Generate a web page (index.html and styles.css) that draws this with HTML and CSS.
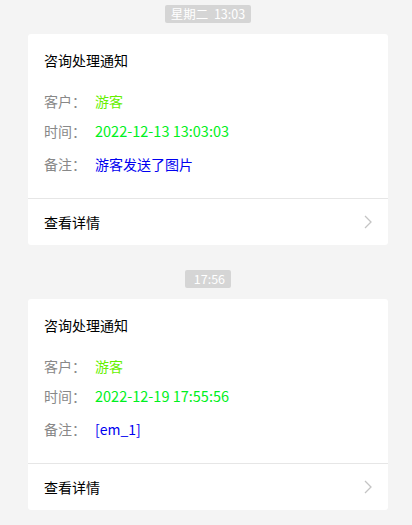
FILE: index.html
```html
<!DOCTYPE html>
<html>
  <head>
    <meta charset="utf-8">
    <title>咨询处理通知</title>
    <link rel="stylesheet" href="styles.css">
  </head>
  <body>
    <div class="msg">
      <div class="stamp"><span>星期二&nbsp;&nbsp;13:03</span></div>
      <div class="card">
        <div class="body">
          <h2>咨询处理通知</h2>
          <div class="row"><span class="label">客户：</span><span class="guest">游客</span></div>
          <div class="row"><span class="label">时间：</span><span class="time">2022-12-13 13:03:03</span></div>
          <div class="row"><span class="label">备注：</span><span class="note">游客发送了图片</span></div>
        </div>
        <div class="more">
          <span>查看详情</span>
          <svg width="8" height="14" viewBox="0 0 8 14"><path d="M1 1l6 6-6 6" fill="none" stroke="#c4c4c4" stroke-width="1.3"/></svg>
        </div>
      </div>
    </div>

    <div class="msg">
      <div class="stamp"><span>&nbsp;17:56</span></div>
      <div class="card">
        <div class="body">
          <h2>咨询处理通知</h2>
          <div class="row"><span class="label">客户：</span><span class="guest">游客</span></div>
          <div class="row"><span class="label">时间：</span><span class="time">2022-12-19 17:55:56</span></div>
          <div class="row"><span class="label">备注：</span><span class="note">[em_1]</span></div>
        </div>
        <div class="more">
          <span>查看详情</span>
          <svg width="8" height="14" viewBox="0 0 8 14"><path d="M1 1l6 6-6 6" fill="none" stroke="#c4c4c4" stroke-width="1.3"/></svg>
        </div>
      </div>
    </div>
  </body>
</html>
```

FILE: styles.css
```css
body {
  margin: 0;
  padding: 5px 24px 0 28px;
  background-color: #f4f4f4;
  font-family: "Noto Sans CJK SC", "Noto Sans", sans-serif;
  color: #000;
}
.msg {
  margin-bottom: 25px;
}
.stamp {
  display: flex;
  justify-content: center;
  height: 18px;
  margin-bottom: 11px;
}
.stamp span {
  display: block;
  background-color: #d5d5d5;
  color: #fff;
  font-size: 12.5px;
  line-height: 18px;
  padding: 0 6px;
  border-radius: 2px;
}
.card {
  width: 360px;
  background-color: #fff;
  border-radius: 3px;
}
.body {
  padding: 14px 16px 24px;
  border-bottom: 1px solid #e6e6e6;
}
h2 {
  font-size: 14px;
  font-weight: normal;
  line-height: 24px;
  margin: 0 0 19px;
}
.row {
  font-size: 14px;
  line-height: 20px;
  margin-bottom: 10px;
  display: flex;
}
.row:nth-of-type(2) {
  margin-bottom: 13px;
}
.row:last-child {
  margin-bottom: 0;
}
.label {
  color: #888;
  width: 51px;
}
.guest {
  color: #66f000;
}
.time {
  color: #00f020;
  font-size: 14.5px;
}
.note {
  color: #0000f0;
}
.more {
  display: flex;
  align-items: center;
  justify-content: space-between;
  height: 46px;
  padding: 0 16px;
  font-size: 14px;
}
```
